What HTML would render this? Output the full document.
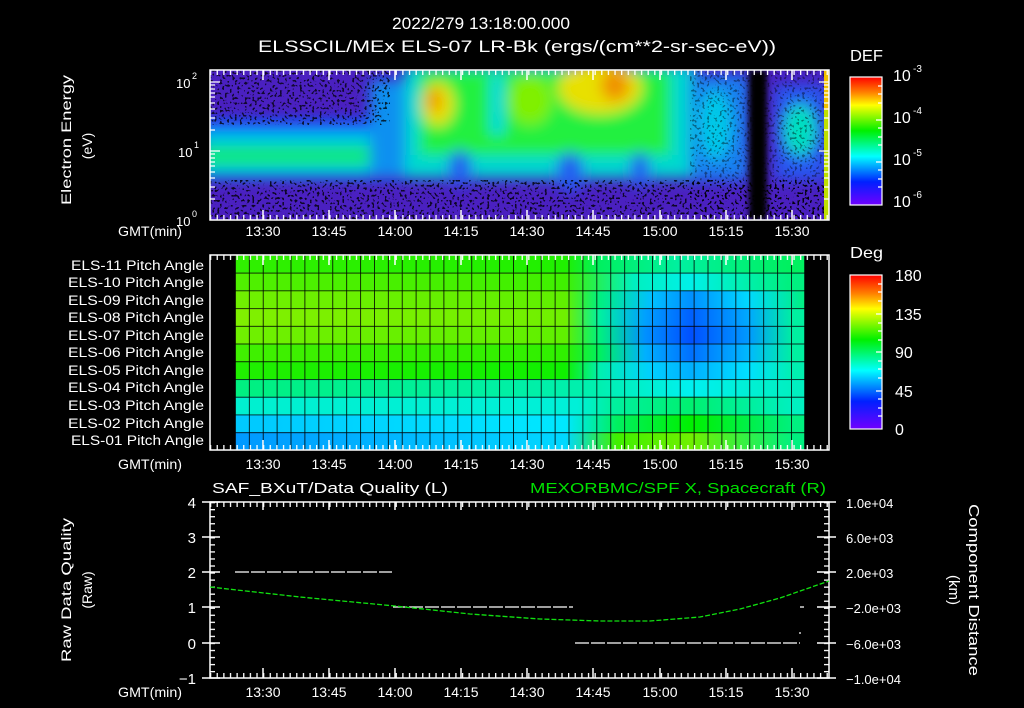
<!DOCTYPE html>
<html><head><meta charset="utf-8">
<style>
html,body{margin:0;padding:0;background:#000;width:1024px;height:708px;overflow:hidden}
svg{display:block}
text{font-family:"Liberation Sans",sans-serif;fill:#fff}
</style></head><body>
<svg width="1024" height="708" viewBox="0 0 1024 708" xmlns="http://www.w3.org/2000/svg">
<defs>
  <clipPath id="c1"><rect x="210" y="70" width="619" height="150"/></clipPath>
  <filter id="bl" x="-30%" y="-30%" width="160%" height="160%"><feGaussianBlur stdDeviation="7"/></filter>
  <filter id="bl2" x="-30%" y="-30%" width="160%" height="160%"><feGaussianBlur stdDeviation="3"/></filter>
  <filter id="spk" x="0" y="0" width="100%" height="100%">
    <feTurbulence type="fractalNoise" baseFrequency="0.4" numOctaves="1" seed="3"/>
    <feColorMatrix type="matrix" values="0 0 0 0 0  0 0 0 0 0  0 0 0 0 0  14 0 0 0 -8"/>
  </filter>
  <pattern id="mx" x="263" y="0" width="6.63" height="10" patternUnits="userSpaceOnUse"><rect x="0" y="0" width="1.3" height="10" fill="#fff"/></pattern>
  <pattern id="my3" x="0" y="502" width="10" height="7.04" patternUnits="userSpaceOnUse"><rect x="0" y="0" width="10" height="1.3" fill="#fff"/></pattern>
  <linearGradient id="cb1" x1="0" y1="0" x2="0" y2="1">
    <stop offset="0" stop-color="#ff0000"/><stop offset="0.12" stop-color="#ff8000"/>
    <stop offset="0.22" stop-color="#ffff00"/><stop offset="0.42" stop-color="#00f000"/>
    <stop offset="0.62" stop-color="#00ffff"/><stop offset="0.82" stop-color="#0020ff"/>
    <stop offset="1" stop-color="#7000ff"/>
  </linearGradient>
  <linearGradient id="r1" x1="235" x2="805" gradientUnits="userSpaceOnUse"><stop offset="0" stop-color="#30f000"/><stop offset="0.58" stop-color="#20f000"/><stop offset="0.64" stop-color="#00f060"/><stop offset="0.78" stop-color="#00f0a0"/><stop offset="0.97" stop-color="#00f060"/></linearGradient>
  <linearGradient id="r2" x1="235" x2="805" gradientUnits="userSpaceOnUse"><stop offset="0" stop-color="#50f000"/><stop offset="0.58" stop-color="#40f000"/><stop offset="0.7" stop-color="#00f0c0"/><stop offset="0.8" stop-color="#00f0e8"/><stop offset="0.97" stop-color="#00f080"/></linearGradient>
  <linearGradient id="r3" x1="235" x2="805" gradientUnits="userSpaceOnUse"><stop offset="0" stop-color="#70f000"/><stop offset="0.58" stop-color="#60f000"/><stop offset="0.64" stop-color="#00f080"/><stop offset="0.73" stop-color="#00c0ff"/><stop offset="0.8" stop-color="#0090ff"/><stop offset="0.9" stop-color="#00d8ff"/><stop offset="1" stop-color="#00f080"/></linearGradient>
  <linearGradient id="r4" x1="235" x2="805" gradientUnits="userSpaceOnUse"><stop offset="0" stop-color="#80f000"/><stop offset="0.58" stop-color="#70f000"/><stop offset="0.64" stop-color="#00f0a0"/><stop offset="0.72" stop-color="#00a0ff"/><stop offset="0.8" stop-color="#0060ff"/><stop offset="0.9" stop-color="#00a8ff"/><stop offset="0.98" stop-color="#00f0a0"/></linearGradient>
  <linearGradient id="r5" x1="235" x2="805" gradientUnits="userSpaceOnUse"><stop offset="0" stop-color="#70f000"/><stop offset="0.58" stop-color="#60f000"/><stop offset="0.64" stop-color="#00f080"/><stop offset="0.72" stop-color="#0090ff"/><stop offset="0.8" stop-color="#0050ff"/><stop offset="0.9" stop-color="#0098ff"/><stop offset="0.98" stop-color="#00f0a0"/></linearGradient>
  <linearGradient id="r6" x1="235" x2="805" gradientUnits="userSpaceOnUse"><stop offset="0" stop-color="#40f000"/><stop offset="0.58" stop-color="#30f000"/><stop offset="0.64" stop-color="#00f060"/><stop offset="0.72" stop-color="#00b0ff"/><stop offset="0.8" stop-color="#0070ff"/><stop offset="0.9" stop-color="#00b8ff"/><stop offset="0.98" stop-color="#00f0a0"/></linearGradient>
  <linearGradient id="r7" x1="235" x2="805" gradientUnits="userSpaceOnUse"><stop offset="0" stop-color="#20f000"/><stop offset="0.58" stop-color="#10f000"/><stop offset="0.64" stop-color="#00f0b0"/><stop offset="0.73" stop-color="#00d0ff"/><stop offset="0.8" stop-color="#00b0ff"/><stop offset="0.9" stop-color="#00e0ff"/><stop offset="0.98" stop-color="#00f0b0"/></linearGradient>
  <linearGradient id="r8" x1="235" x2="805" gradientUnits="userSpaceOnUse"><stop offset="0" stop-color="#00f080"/><stop offset="0.64" stop-color="#00f0b0"/><stop offset="0.8" stop-color="#00f0f0"/><stop offset="0.98" stop-color="#00f0c0"/></linearGradient>
  <linearGradient id="r9" x1="235" x2="805" gradientUnits="userSpaceOnUse"><stop offset="0" stop-color="#00f0d0"/><stop offset="0.6" stop-color="#00f0d8"/><stop offset="0.66" stop-color="#00f0a0"/><stop offset="0.8" stop-color="#00f070"/><stop offset="0.98" stop-color="#00f0c0"/></linearGradient>
  <linearGradient id="r10" x1="235" x2="805" gradientUnits="userSpaceOnUse"><stop offset="0" stop-color="#00c8ff"/><stop offset="0.58" stop-color="#00e8ff"/><stop offset="0.67" stop-color="#00f060"/><stop offset="0.8" stop-color="#00f000"/><stop offset="0.98" stop-color="#00f080"/></linearGradient>
  <linearGradient id="r11" x1="235" x2="805" gradientUnits="userSpaceOnUse"><stop offset="0" stop-color="#0098ff"/><stop offset="0.58" stop-color="#00d8ff"/><stop offset="0.67" stop-color="#40f000"/><stop offset="0.8" stop-color="#70f000"/><stop offset="0.98" stop-color="#00f080"/></linearGradient>
  <pattern id="grid" x="235" y="255" width="13.9" height="17.73" patternUnits="userSpaceOnUse"><path d="M0 0V17.73M0 0H13.9" stroke="#000" stroke-width="1.6" fill="none"/></pattern>
</defs>

<!-- Titles -->
<text x="481" y="29" font-size="17" text-anchor="middle" textLength="178" lengthAdjust="spacingAndGlyphs">2022/279 13:18:00.000</text>
<text x="517" y="52" font-size="17" text-anchor="middle" textLength="518" lengthAdjust="spacingAndGlyphs">ELSSCIL/MEx ELS-07 LR-Bk  (ergs/(cm**2-sr-sec-eV))</text>

<!-- Panel 1 spectrogram -->
<g clip-path="url(#c1)">
  <rect x="210" y="70" width="619" height="150" fill="#4a20c0"/>
  <g filter="url(#bl)">
    <rect x="200" y="120" width="200" height="58" fill="#1060ff"/>
    <rect x="200" y="132" width="190" height="44" fill="#00c8e0"/>
    <rect x="200" y="146" width="180" height="20" fill="#10e880"/>
    <rect x="370" y="80" width="60" height="98" fill="#1090f0"/>
    <rect x="405" y="65" width="290" height="113" fill="#00d8d0"/>
    <rect x="420" y="70" width="250" height="85" fill="#20f040"/>
    <ellipse cx="438" cy="104" rx="16" ry="22" fill="#e8e000"/>
    <ellipse cx="434" cy="100" rx="6" ry="12" fill="#f08000"/>
    <ellipse cx="600" cy="88" rx="42" ry="26" fill="#e8e000"/>
    <ellipse cx="615" cy="85" rx="14" ry="16" fill="#f09000"/>
    <ellipse cx="530" cy="100" rx="22" ry="25" fill="#80f000"/>
    <ellipse cx="460" cy="168" rx="12" ry="18" fill="#2060f0"/>
    <ellipse cx="570" cy="172" rx="14" ry="20" fill="#2060f0"/>
    <ellipse cx="640" cy="170" rx="10" ry="18" fill="#2060f0"/>
    <rect x="490" y="75" width="14" height="60" fill="#00d8e0"/>
    <rect x="690" y="75" width="58" height="105" fill="#1880f0"/>
    <ellipse cx="715" cy="125" rx="16" ry="35" fill="#00c8e8"/>
    <rect x="775" y="85" width="52" height="95" fill="#2858f0"/>
    <ellipse cx="800" cy="130" rx="16" ry="26" fill="#00e0c0"/>
  </g>
  <rect x="210" y="70" width="180" height="55" fill="#000" filter="url(#spk)" opacity="0.75"/>
  <rect x="210" y="180" width="619" height="40" fill="#000" filter="url(#spk)" opacity="0.8"/>
  <rect x="690" y="70" width="139" height="110" fill="#000" filter="url(#spk)" opacity="0.4"/>
  <rect x="690" y="180" width="139" height="40" fill="#000" filter="url(#spk)" opacity="0.6"/>
  <rect x="749" y="70" width="18" height="150" fill="#000" filter="url(#bl2)"/>
  <rect x="824" y="70" width="5" height="150" fill="#c0e000"/>
  <rect x="824" y="70" width="5" height="40" fill="#f0c000"/>
</g>
<rect x="210" y="70" width="619" height="150" fill="none" stroke="#fff" stroke-width="1.5"/>
<rect x="210" y="70" width="619" height="5" fill="url(#mx)"/>
<rect x="210" y="215" width="619" height="5" fill="url(#mx)"/>
<path stroke="#fff" stroke-width="1.5" d="M263 70v10M329 70v10M395 70v10M461 70v10M527 70v10M593 70v10M660 70v10M726 70v10M792 70v10M263 220v-10M329 220v-10M395 220v-10M461 220v-10M527 220v-10M593 220v-10M660 220v-10M726 220v-10M792 220v-10"/>
<path stroke="#fff" stroke-width="1.3" d="M210 151h10M210 82h10M210 199h5M210 187h5M210 178h5M210 172h5M210 166h5M210 162h5M210 158h5M210 154h5M210 130h5M210 118h5M210 109h5M210 103h5M210 97h5M210 93h5M210 89h5M210 85h5M829 151h-10M829 82h-10M829 199h-5M829 187h-5M829 178h-5M829 172h-5M829 166h-5M829 162h-5M829 158h-5M829 154h-5M829 130h-5M829 118h-5M829 109h-5M829 103h-5M829 97h-5M829 93h-5M829 89h-5M829 85h-5"/>
<g font-size="13">
<text x="176" y="88">10</text><text x="192" y="79" font-size="9">2</text>
<text x="178" y="157">10</text><text x="194" y="148" font-size="9">1</text>
<text x="176" y="226">10</text><text x="192" y="217" font-size="9">0</text>
</g>
<text transform="translate(71,140) rotate(-90)" font-size="14" text-anchor="middle" textLength="130" lengthAdjust="spacingAndGlyphs">Electron Energy</text>
<text transform="translate(92,146) rotate(-90)" font-size="14" text-anchor="middle">(eV)</text>
<g font-size="14" text-anchor="middle">
<text x="150" y="236" textLength="64" lengthAdjust="spacingAndGlyphs">GMT(min)</text>
<text x="263" y="236">13:30</text><text x="329" y="236">13:45</text><text x="395" y="236">14:00</text><text x="461" y="236">14:15</text><text x="527" y="236">14:30</text><text x="593" y="236">14:45</text><text x="660" y="236">15:00</text><text x="726" y="236">15:15</text><text x="792" y="236">15:30</text>
</g>
<text x="850" y="61" font-size="16" textLength="33" lengthAdjust="spacingAndGlyphs">DEF</text>
<rect x="850" y="77" width="32" height="128" fill="url(#cb1)" stroke="#fff" stroke-width="1.2"/>
<path stroke="#fff" stroke-width="1.2" d="M882 86h-4M882 94h-4M882 103h-4M882 120h-6M882 128h-4M882 137h-4M882 145h-4M882 162h-6M882 170h-4M882 179h-4M882 187h-4"/>
<g font-size="16">
<text x="893" y="81">10</text><text x="913" y="72" font-size="10">-3</text>
<text x="893" y="123">10</text><text x="913" y="114" font-size="10">-4</text>
<text x="893" y="165">10</text><text x="913" y="156" font-size="10">-5</text>
<text x="893" y="207">10</text><text x="913" y="198" font-size="10">-6</text>
</g>

<!-- Panel 2 -->
<g>
<rect x="235" y="255" width="570" height="17.73" fill="url(#r1)"/>
<rect x="235" y="272.73" width="570" height="17.73" fill="url(#r2)"/>
<rect x="235" y="290.46" width="570" height="17.73" fill="url(#r3)"/>
<rect x="235" y="308.19" width="570" height="17.73" fill="url(#r4)"/>
<rect x="235" y="325.92" width="570" height="17.73" fill="url(#r5)"/>
<rect x="235" y="343.65" width="570" height="17.73" fill="url(#r6)"/>
<rect x="235" y="361.38" width="570" height="17.73" fill="url(#r7)"/>
<rect x="235" y="379.11" width="570" height="17.73" fill="url(#r8)"/>
<rect x="235" y="396.84" width="570" height="17.73" fill="url(#r9)"/>
<rect x="235" y="414.57" width="570" height="17.73" fill="url(#r10)"/>
<rect x="235" y="432.3" width="570" height="17.7" fill="url(#r11)"/>
<rect x="235" y="255" width="570" height="195" fill="url(#grid)"/>
<path d="M805 255V450" stroke="#000" stroke-width="1.5"/>
</g>
<rect x="210" y="255" width="619" height="195" fill="none" stroke="#fff" stroke-width="1.5"/>
<rect x="210" y="255" width="619" height="5" fill="url(#mx)"/>
<rect x="210" y="445" width="619" height="5" fill="url(#mx)"/>
<path stroke="#fff" stroke-width="1.5" d="M263 255v10M329 255v10M395 255v10M461 255v10M527 255v10M593 255v10M660 255v10M726 255v10M792 255v10M263 450v-10M329 450v-10M395 450v-10M461 450v-10M527 450v-10M593 450v-10M660 450v-10M726 450v-10M792 450v-10"/>
<g font-size="13.5" text-anchor="end">
<text x="204" y="270" textLength="133" lengthAdjust="spacingAndGlyphs">ELS-11 Pitch Angle</text>
<text x="204" y="287" textLength="136" lengthAdjust="spacingAndGlyphs">ELS-10 Pitch Angle</text>
<text x="204" y="305" textLength="136" lengthAdjust="spacingAndGlyphs">ELS-09 Pitch Angle</text>
<text x="204" y="322" textLength="136" lengthAdjust="spacingAndGlyphs">ELS-08 Pitch Angle</text>
<text x="204" y="340" textLength="136" lengthAdjust="spacingAndGlyphs">ELS-07 Pitch Angle</text>
<text x="204" y="357" textLength="136" lengthAdjust="spacingAndGlyphs">ELS-06 Pitch Angle</text>
<text x="204" y="375" textLength="136" lengthAdjust="spacingAndGlyphs">ELS-05 Pitch Angle</text>
<text x="204" y="392" textLength="136" lengthAdjust="spacingAndGlyphs">ELS-04 Pitch Angle</text>
<text x="204" y="410" textLength="136" lengthAdjust="spacingAndGlyphs">ELS-03 Pitch Angle</text>
<text x="204" y="428" textLength="136" lengthAdjust="spacingAndGlyphs">ELS-02 Pitch Angle</text>
<text x="204" y="445" textLength="133" lengthAdjust="spacingAndGlyphs">ELS-01 Pitch Angle</text>
</g>
<g font-size="14" text-anchor="middle">
<text x="150" y="469" textLength="64" lengthAdjust="spacingAndGlyphs">GMT(min)</text>
<text x="263" y="469">13:30</text><text x="329" y="469">13:45</text><text x="395" y="469">14:00</text><text x="461" y="469">14:15</text><text x="527" y="469">14:30</text><text x="593" y="469">14:45</text><text x="660" y="469">15:00</text><text x="726" y="469">15:15</text><text x="792" y="469">15:30</text>
</g>
<text x="850" y="258" font-size="16" textLength="33" lengthAdjust="spacingAndGlyphs">Deg</text>
<rect x="850" y="275" width="32" height="154" fill="url(#cb1)" stroke="#fff" stroke-width="1.2"/>
<path stroke="#fff" stroke-width="1.2" d="M882 284h-4M882 292h-4M882 301h-4M882 314h-6M882 323h-4M882 331h-4M882 340h-4M882 352h-6M882 361h-4M882 369h-4M882 378h-4M882 391h-6M882 399h-4M882 408h-4M882 416h-4"/>
<g font-size="16">
<text x="895" y="281">180</text><text x="895" y="320">135</text><text x="895" y="358">90</text><text x="895" y="397">45</text><text x="895" y="435">0</text>
</g>

<!-- Panel 3 -->
<text x="212" y="493" font-size="15" textLength="236" lengthAdjust="spacingAndGlyphs">SAF_BXuT/Data Quality (L)</text>
<text x="826" y="493" font-size="15" text-anchor="end" style="fill:#00e000" textLength="296" lengthAdjust="spacingAndGlyphs">MEXORBMC/SPF X, Spacecraft (R)</text>
<rect x="210" y="502" width="619" height="176" fill="none" stroke="#fff" stroke-width="1.5"/>
<rect x="210" y="502" width="619" height="5" fill="url(#mx)"/>
<rect x="210" y="673" width="619" height="5" fill="url(#mx)"/>
<path stroke="#fff" stroke-width="1.5" d="M263 502v8M329 502v8M395 502v8M461 502v8M527 502v8M593 502v8M660 502v8M726 502v8M792 502v8M263 678v-10M329 678v-10M395 678v-10M461 678v-10M527 678v-10M593 678v-10M660 678v-10M726 678v-10M792 678v-10"/>
<rect x="210" y="502" width="5" height="176" fill="url(#my3)"/>
<rect x="824" y="502" width="5" height="176" fill="url(#my3)"/>
<path stroke="#fff" stroke-width="1.5" d="M202 502h18M202 537h18M202 572h18M202 607h18M202 643h18M202 678h18M817 502h19M817 537h19M817 572h19M817 607h19M817 643h19M817 678h19"/>
<g font-size="15" text-anchor="end">
<text x="196" y="508">4</text><text x="196" y="543">3</text><text x="196" y="578">2</text><text x="196" y="613">1</text><text x="196" y="649">0</text><text x="196" y="684">−1</text>
</g>
<g font-size="13">
<text x="846" y="508">1.0e+04</text><text x="846" y="543">6.0e+03</text><text x="846" y="578">2.0e+03</text><text x="846" y="613">−2.0e+03</text><text x="846" y="649">−6.0e+03</text><text x="846" y="684">−1.0e+04</text>
</g>
<path stroke="#fff" stroke-width="1.3" stroke-dasharray="14 2" d="M235 572H392M393 607H573M575 643H800"/>
<path stroke="#fff" stroke-width="1.2" d="M800 607h4M800 632v2"/>
<path stroke="#10e010" stroke-width="1.3" fill="none" stroke-dasharray="5 2" d="M210 587 L300 597 L395 606 L470 614 L540 619 L600 621 L650 621 L700 617 L740 609 L780 598 L829 581"/>
<text transform="translate(71,590) rotate(-90)" font-size="14" text-anchor="middle" textLength="144" lengthAdjust="spacingAndGlyphs">Raw Data Quality</text>
<text transform="translate(92,590) rotate(-90)" font-size="14" text-anchor="middle">(Raw)</text>
<text transform="translate(969,590) rotate(90)" font-size="15" text-anchor="middle" textLength="172" lengthAdjust="spacingAndGlyphs">Component Distance</text>
<text transform="translate(949,590) rotate(90)" font-size="15" text-anchor="middle">(km)</text>
<g font-size="14" text-anchor="middle">
<text x="150" y="697" textLength="64" lengthAdjust="spacingAndGlyphs">GMT(min)</text>
<text x="263" y="697">13:30</text><text x="329" y="697">13:45</text><text x="395" y="697">14:00</text><text x="461" y="697">14:15</text><text x="527" y="697">14:30</text><text x="593" y="697">14:45</text><text x="660" y="697">15:00</text><text x="726" y="697">15:15</text><text x="792" y="697">15:30</text>
</g>
</svg>
</body></html>
